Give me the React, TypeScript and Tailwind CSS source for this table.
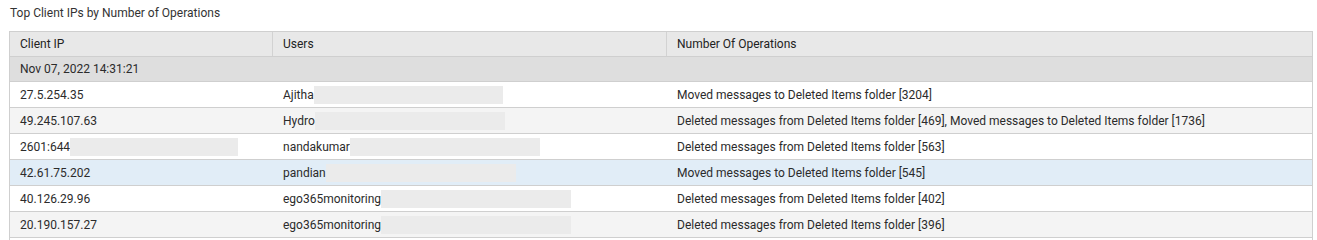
import React from "react";

type Row = {
  ip: string;
  ipMask?: number;
  user: string;
  userMask: number;
  ops: string;
  bg: string;
};

const rows: Row[] = [
  { ip: "27.5.254.35", user: "Ajitha", userMask: 189, ops: "Moved messages to Deleted Items folder [3204]", bg: "bg-white" },
  {
    ip: "49.245.107.63",
    user: "Hydro",
    userMask: 190,
    ops: "Deleted messages from Deleted Items folder [469], Moved messages to Deleted Items folder [1736]",
    bg: "bg-[#f4f4f4]",
  },
  { ip: "2601:644", ipMask: 168, user: "nandakumar", userMask: 190, ops: "Deleted messages from Deleted Items folder [563]", bg: "bg-white" },
  { ip: "42.61.75.202", user: "pandian", userMask: 190, ops: "Moved messages to Deleted Items folder [545]", bg: "bg-[#e1edf7]" },
  { ip: "40.126.29.96", user: "ego365monitoring", userMask: 190, ops: "Deleted messages from Deleted Items folder [402]", bg: "bg-white" },
  { ip: "20.190.157.27", user: "ego365monitoring", userMask: 190, ops: "Deleted messages from Deleted Items folder [396]", bg: "bg-[#f4f4f4]" },
];

function Mask({ w }: { w: number }) {
  // redacted part of the value
  return <span className="inline-block h-[18px] bg-[#ebebeb] align-middle" style={{ width: w }} />;
}

export default function App() {
  return (
    <div className="bg-white w-[1317px] h-[240px] overflow-hidden text-[12px] text-[#2b2b2b] font-['Roboto',sans-serif]">
      <div className="pl-[10px] pt-[4px] h-[31px] text-[12px] text-[#333]">Top Client IPs by Number of Operations</div>
      <div className="ml-[9px] w-[1304px] border border-b-0 border-[#cfcfcf]">
        <div className="grid grid-cols-[263px_394px_1fr] h-[25px] bg-[#e8e8e8] border-b border-[#cfcfcf] text-[#222]">
          <div className="pl-[10px] flex items-center border-r border-[#d2d2d2]">Client IP</div>
          <div className="pl-[10px] flex items-center border-r border-[#d2d2d2]">Users</div>
          <div className="pl-[10px] flex items-center">Number Of Operations</div>
        </div>
        <div className="h-[25px] bg-[#dedede] border-b border-[#cfcfcf] pl-[10px] flex items-center">Nov 07, 2022 14:31:21</div>
        {rows.map((r, i) => (
          <div key={i} className={`grid grid-cols-[263px_394px_1fr] h-[26px] border-b border-[#cfcfcf] ${r.bg}`}>
            <div className="pl-[10px] flex items-center">
              <span>{r.ip}</span>
              {r.ipMask ? <Mask w={r.ipMask} /> : null}
            </div>
            <div className="pl-[10px] flex items-center">
              <span>{r.user}</span>
              <Mask w={r.userMask} />
            </div>
            <div className="pl-[10px] flex items-center whitespace-nowrap">{r.ops}</div>
          </div>
        ))}
        <div className="h-[26px] bg-white" />
      </div>
    </div>
  );
}
